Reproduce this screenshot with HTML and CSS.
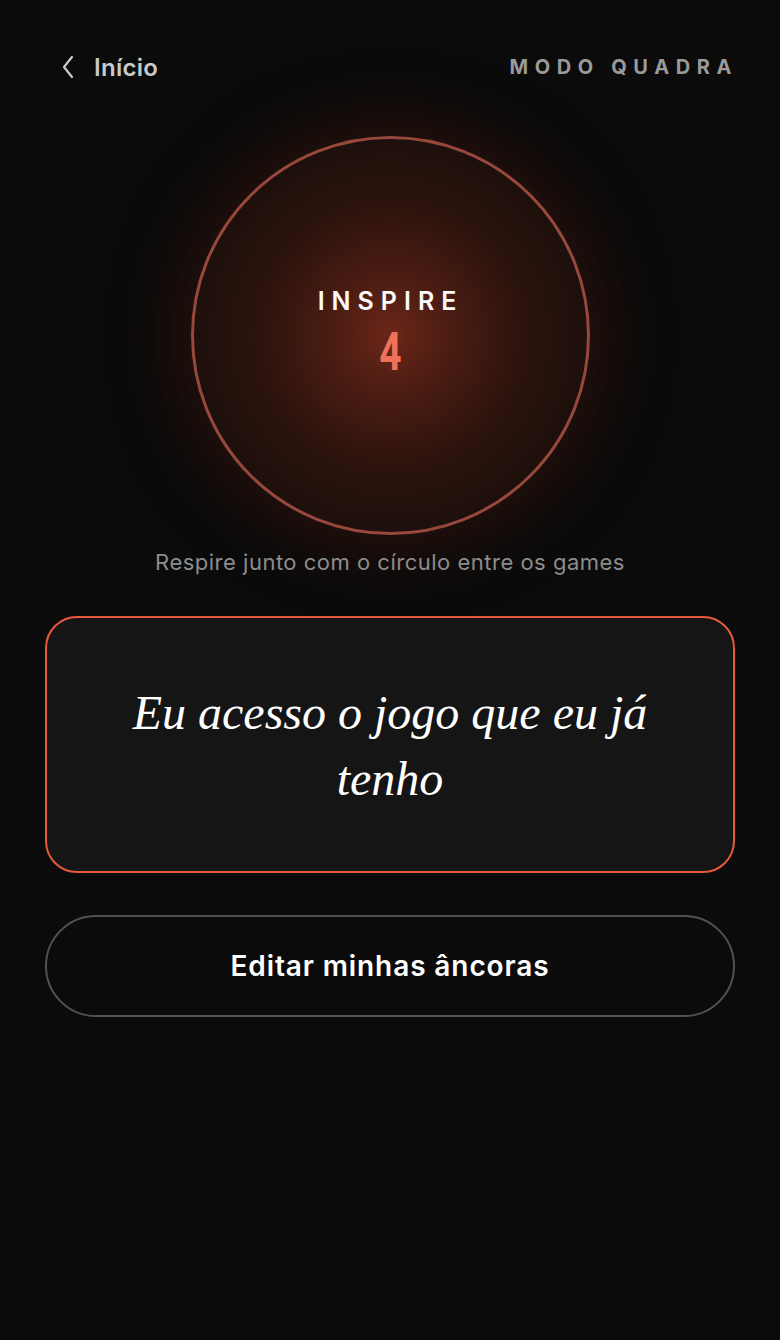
FILE: index.html
```html
<!DOCTYPE html>
<html lang="pt">
<head>
<meta charset="utf-8">
<link rel="stylesheet" href="styles.css">
</head>
<body>
<div class="screen">
  <header class="topbar">
    <a class="back">
      <svg class="chev" width="14" height="24" viewBox="0 0 14 24"><path d="M11 2 L3 12 L11 22" fill="none" stroke="#c9c9c9" stroke-width="2.2" stroke-linecap="round" stroke-linejoin="round"/></svg>
      <span>Início</span>
    </a>
    <div class="mode">MODO QUADRA</div>
  </header>

  <section class="breath">
    <div class="circle">
      <div class="phase">INSPIRE</div>
      <div class="count">4</div>
    </div>
    <p class="hint">Respire junto com o círculo entre os games</p>
  </section>

  <div class="card">
    <p class="anchor">Eu acesso o jogo que eu já tenho</p>
  </div>

  <button class="edit">Editar minhas âncoras</button>
</div>
</body>
</html>
```

FILE: styles.css
```css
html, body {
  margin: 0;
  padding: 0;
  background: #0b0b0b;
}
.screen {
  width: 780px;
  min-height: 1340px;
  box-sizing: border-box;
  padding: 0 45px;
  font-family: Inter, Lato, sans-serif;
  color: #fff;
  display: flex;
  flex-direction: column;
}
.topbar {
  display: flex;
  align-items: center;
  justify-content: space-between;
  height: 134px;
  padding: 0 3px 0 16px;
}
.back {
  display: flex;
  align-items: center;
  gap: 19px;
  color: #c9c9c9;
  font-size: 24px;
  font-weight: 600;
  letter-spacing: 0.3px;
}
.mode {
  color: #9a9a9a;
  font-size: 20px;
  font-weight: 700;
  letter-spacing: 0.33em;
  margin-right: -6px;
}
.breath {
  display: flex;
  flex-direction: column;
  align-items: center;
}
.circle {
  margin-top: 2px;
  width: 399px;
  height: 399px;
  box-sizing: border-box;
  border-radius: 50%;
  border: 3px solid #98483a;
  background: radial-gradient(circle at 50% 50%, #6b2618 0%, #4a1c12 22%, #2c130d 48%, #1c0f0b 72%, #170e0b 100%);
  box-shadow: 0 0 60px 20px rgba(60, 20, 12, 0.5);
  display: flex;
  flex-direction: column;
  align-items: center;
  justify-content: center;
  padding-bottom: 8px;
}
.phase {
  font-size: 25px;
  font-weight: 600;
  letter-spacing: 0.28em;
  margin-right: -0.28em;
  margin-left: -6px;
  line-height: 30px;
  color: #fbfbfb;
}
.count {
  font-family: Roboto, sans-serif;
  font-size: 54px;
  font-weight: 700;
  color: #f0705a;
  line-height: 50px;
  transform: scaleX(0.72);
  margin-top: 11px;
}
.hint {
  margin: 13px 0 0;
  font-size: 22px;
  letter-spacing: 0.5px;
  color: #8c8c8c;
  line-height: 28px;
}
.card {
  margin-top: 40px;
  height: 257px;
  flex-shrink: 0;
  box-sizing: border-box;
  border: 2px solid #e65a3e;
  border-radius: 32px;
  background: #151515;
  display: flex;
  align-items: center;
  justify-content: center;
  padding: 2px 60px 0;
}
.anchor {
  margin: 0;
  font-family: "Liberation Serif", "DejaVu Serif", serif;
  font-style: italic;
  font-size: 48px;
  line-height: 66px;
  text-align: center;
  color: #fff;
}
.edit {
  margin-top: 42px;
  height: 102px;
  flex-shrink: 0;
  border-radius: 51px;
  border: 2px solid #525252;
  background: #0b0b0b;
  color: #fff;
  font-family: Inter, Lato, sans-serif;
  font-size: 28px;
  font-weight: 600;
  letter-spacing: 0.9px;
}
```
